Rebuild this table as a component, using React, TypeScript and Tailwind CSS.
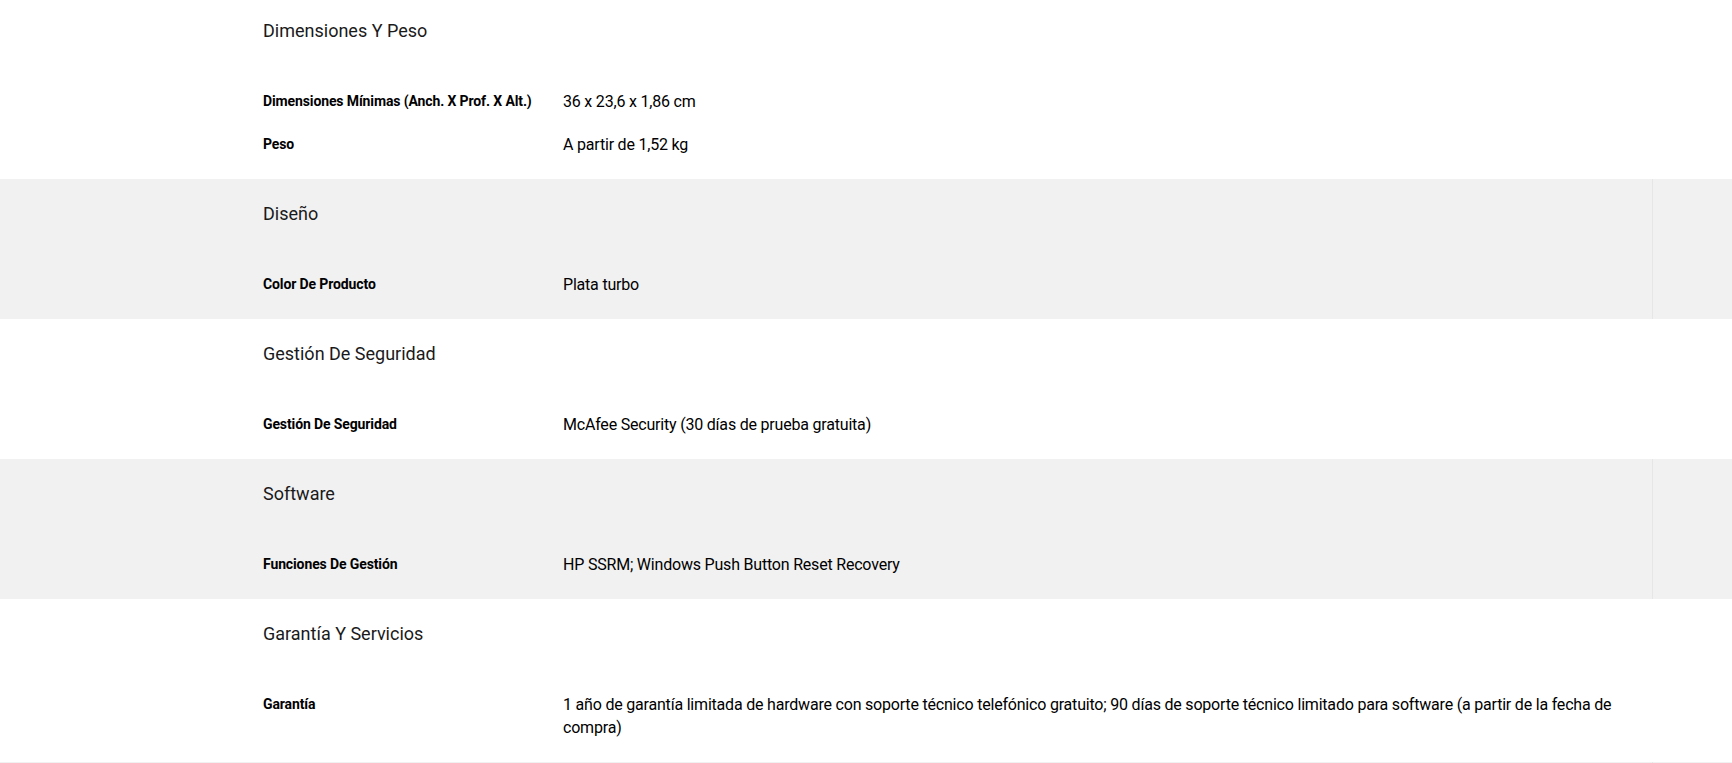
import React from "react";

type Row = { label: string; value: React.ReactNode };
type Section = { title: string; rows: Row[]; gray: boolean };

const sections: Section[] = [
  {
    title: "Dimensiones Y Peso",
    gray: false,
    rows: [
      { label: "Dimensiones Mínimas (Anch. X Prof. X Alt.)", value: "36 x 23,6 x 1,86 cm" },
      { label: "Peso", value: "A partir de 1,52 kg" },
    ],
  },
  {
    title: "Diseño",
    gray: true,
    rows: [{ label: "Color De Producto", value: "Plata turbo" }],
  },
  {
    title: "Gestión De Seguridad",
    gray: false,
    rows: [{ label: "Gestión De Seguridad", value: "McAfee Security (30 días de prueba gratuita)" }],
  },
  {
    title: "Software",
    gray: true,
    rows: [{ label: "Funciones De Gestión", value: "HP SSRM; Windows Push Button Reset Recovery" }],
  },
  {
    title: "Garantía Y Servicios",
    gray: false,
    rows: [
      {
        label: "Garantía",
        value: (
          <>
            1 año de garantía limitada de hardware con soporte técnico telefónico gratuito; 90 días de soporte técnico limitado para software (a partir de la fecha de
            <br />
            compra)
          </>
        ),
      },
    ],
  },
];

function SectionBlock({ s, first }: { s: Section; first: boolean }) {
  return (
    <div className={`flex ${s.gray ? "bg-[#f1f1f1]" : "bg-white"}`}>
      <div className={`flex-1 pl-[263px] pb-[13px] ${first ? "pt-[19px]" : "pt-[23px]"}`}>
        <h2 className="text-[18px] leading-[24px] font-normal text-[#1a1a1a] tracking-[0px]">{s.title}</h2>
        <div className="mt-[37px]">
          {s.rows.map((r) => (
            <div key={r.label} className="flex items-start py-[10px]">
              <div className="w-[300px] shrink-0 text-[14px] leading-[23px] font-bold text-black tracking-[-0.12px]">
                {r.label}
              </div>
              <div className="flex-1 text-[16px] leading-[23px] text-black tracking-[-0.2px]">{r.value}</div>
            </div>
          ))}
        </div>
      </div>
      <div className={`w-[80px] shrink-0 ${s.gray ? "border-l border-[#e6e6e6]" : ""}`} />
    </div>
  );
}

export default function App() {
  return (
    <div className="w-[1732px] h-[763px] overflow-hidden bg-white" style={{ fontFamily: "Roboto, 'Liberation Sans', sans-serif" }}>
      {sections.map((s, i) => (
        <SectionBlock key={s.title} s={s} first={i === 0} />
      ))}
      <div className="flex bg-[#f1f1f1] h-[40px]">
        <div className="flex-1" />
        <div className="w-[80px] border-l border-[#e6e6e6]" />
      </div>
    </div>
  );
}
